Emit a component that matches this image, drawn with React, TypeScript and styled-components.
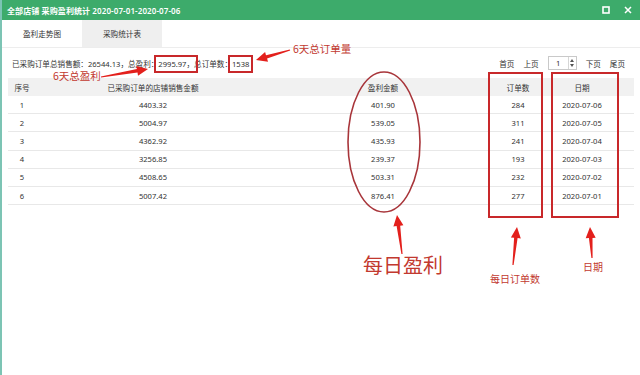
import React from 'react';
import styled, { createGlobalStyle } from 'styled-components';

// --- GLOBAL STYLES ---
const GlobalStyle = createGlobalStyle`
  * { margin: 0; padding: 0; box-sizing: border-box; }
  body { font-family: 'Noto Sans', 'Noto Sans CJK SC', sans-serif; background: #fff; color: #333; }
`;

// --- DATA ---
const rows = [
  { id: 1, sales: '4403.32', profit: '401.90', orders: 284, date: '2020-07-06' },
  { id: 2, sales: '5004.97', profit: '539.05', orders: 311, date: '2020-07-05' },
  { id: 3, sales: '4362.92', profit: '435.93', orders: 241, date: '2020-07-04' },
  { id: 4, sales: '3256.85', profit: '239.37', orders: 193, date: '2020-07-03' },
  { id: 5, sales: '4508.65', profit: '503.31', orders: 232, date: '2020-07-02' },
  { id: 6, sales: '5007.42', profit: '876.41', orders: 277, date: '2020-07-01' },
];

// --- STYLED COMPONENTS ---
const Window = styled.div`
  position: relative; width: 640px; height: 375px; overflow: hidden;
  display: flex; flex-direction: column; background: #fff;
  border-left: 2px solid #7cc4b4;
`;

const TitleBar = styled.div`
  height: 20px; flex-shrink: 0; background: #3dab6b; display: flex; align-items: center;
  padding: 0 8px 0 5px; color: #fff;
`;

const Title = styled.span`
  font-size: 8px; font-weight: 600; letter-spacing: 0.1px; white-space: nowrap;
`;

const WinButtons = styled.div`
  margin-left: auto; display: flex; align-items: center; gap: 14px;
`;

const TabBar = styled.div`
  height: 28px; flex-shrink: 0; display: flex; border-bottom: 1px solid #ededed;
`;

const Tab = styled.div<{ $active?: boolean }>`
  width: 80px; display: flex; align-items: center; justify-content: center;
  font-size: 7.6px; color: #333;
  background: ${p => (p.$active ? '#efefef' : 'transparent')};
`;

const Body = styled.div`
  flex: 1; padding: 0 6px 0 6px;
`;

const Toolbar = styled.div`
  height: 30px; display: flex; align-items: center; justify-content: space-between;
  padding: 0 9px 0 4px; font-size: 7.6px;
`;

const Summary = styled.div`
  white-space: nowrap;
`;

const Mark = styled.span`
  outline: 2px solid #c8282a; outline-offset: 2px;
`;

const Pager = styled.div`
  display: flex; align-items: center; gap: 9px;
`;

const PageInput = styled.div`
  width: 29px; height: 14px; border: 1px solid #c9c9c9; display: flex; align-items: stretch; background: #fff;
`;

const PageValue = styled.span`
  flex: 1; display: flex; align-items: center; justify-content: center; font-size: 7.6px;
`;

const Spin = styled.div`
  width: 8px; border-left: 1px solid #d6d6d6; display: flex; flex-direction: column;
  align-items: center; justify-content: space-around; padding: 1px 0;
`;

const SpinArrow = styled.span<{ $down?: boolean }>`
  width: 0; height: 0; border-left: 2px solid transparent; border-right: 2px solid transparent;
  ${p => (p.$down ? 'border-top: 3px solid #555;' : 'border-bottom: 3px solid #555;')}
`;

const Grid = styled.div`
  display: grid; grid-template-columns: 28px 234px 226px 44px 84px 1fr;
  font-size: 7.6px;
`;

const HeadRow = styled.div`
  display: contents;
  & > div { height: 18px; background: #f1f1f1; }
`;

const Row = styled.div`
  display: contents;
  & > div { height: 18.2px; border-bottom: 1px solid #e8e8e8; }
`;

const Cell = styled.div`
  display: flex; align-items: center; justify-content: center; white-space: nowrap;
`;

const Overlay = styled.svg`
  position: absolute; left: -2px; top: 0; pointer-events: none;
`;

const Note = styled.span<{ $size: number; $x: number; $y: number }>`
  position: absolute; left: ${p => p.$x}px; top: ${p => p.$y}px;
  font-size: ${p => p.$size}px; line-height: 1; color: #c2392f; white-space: nowrap;
  font-family: 'Noto Sans CJK SC', sans-serif;
`;

// tapered arrow from tail to tip
function arrowPoints(tx: number, ty: number, hx: number, hy: number) {
  const dx = hx - tx, dy = hy - ty;
  const len = Math.hypot(dx, dy);
  const ux = dx / len, uy = dy / len;
  const nx = -uy, ny = ux;
  const headLen = 11;
  const bx = hx - ux * headLen, by = hy - uy * headLen;
  const pts: [number, number][] = [
    [tx + nx * 0.6, ty + ny * 0.6],
    [bx + nx * 1.8, by + ny * 1.8],
    [bx + nx * 5, by + ny * 5],
    [hx, hy],
    [bx - nx * 5, by - ny * 5],
    [bx - nx * 1.8, by - ny * 1.8],
    [tx - nx * 0.6, ty - ny * 0.6],
  ];
  return pts.map(p => p.map(v => v.toFixed(1)).join(',')).join(' ');
}

const arrows = [
  [290, 50, 256, 60],
  [101, 77, 148, 69],
  [402, 254, 397, 215],
  [513, 265, 517, 227],
  [592, 258, 590, 227],
];

function App() {
  return (
    <>
      <GlobalStyle />
      <Window>
        <TitleBar>
          <Title>全部店铺 采购盈利统计 2020-07-01-2020-07-06</Title>
          <WinButtons>
            <svg width="8" height="8" viewBox="0 0 8 8">
              <rect x="1" y="1" width="6" height="6" fill="none" stroke="#fff" strokeWidth="1.6" />
            </svg>
            <svg width="8" height="8" viewBox="0 0 8 8">
              <path d="M1 1 L7 7 M7 1 L1 7" stroke="#fff" strokeWidth="1.5" />
            </svg>
          </WinButtons>
        </TitleBar>

        <TabBar>
          <Tab>盈利走势图</Tab>
          <Tab $active>采购统计表</Tab>
        </TabBar>

        <Body>
          <Toolbar>
            <Summary>
              已采购订单总销售额：26544.13，总盈利：<Mark>2995.97，</Mark>总订单数：<Mark>1538</Mark>
            </Summary>
            <Pager>
              <span>首页</span>
              <span>上页</span>
              <PageInput>
                <PageValue>1</PageValue>
                <Spin>
                  <SpinArrow />
                  <SpinArrow $down />
                </Spin>
              </PageInput>
              <span>下页</span>
              <span>尾页</span>
            </Pager>
          </Toolbar>

          <Grid>
            <HeadRow>
              <Cell>序号</Cell>
              <Cell>已采购订单的店铺销售金额</Cell>
              <Cell>盈利金额</Cell>
              <Cell>订单数</Cell>
              <Cell>日期</Cell>
              <Cell />
            </HeadRow>
            {rows.map(r => (
              <Row key={r.id}>
                <Cell>{r.id}</Cell>
                <Cell>{r.sales}</Cell>
                <Cell>{r.profit}</Cell>
                <Cell>{r.orders}</Cell>
                <Cell>{r.date}</Cell>
                <Cell />
              </Row>
            ))}
          </Grid>
        </Body>

        <Overlay width="640" height="375" viewBox="0 0 640 375">
          <ellipse cx="384" cy="142" rx="36" ry="70" fill="none" stroke="#a8353a" strokeWidth="1.6" />
          <rect x="489" y="73" width="53" height="144" fill="none" stroke="#c8282a" strokeWidth="2" />
          <rect x="552" y="73" width="66" height="144" fill="none" stroke="#c8282a" strokeWidth="2" />
          {arrows.map((a, i) => (
            <polygon key={i} points={arrowPoints(a[0], a[1], a[2], a[3])} fill="#e3201c" />
          ))}
        </Overlay>

        <Note $size={10.5} $x={291} $y={44}>6天总订单量</Note>
        <Note $size={10.5} $x={51} $y={71}>6天总盈利</Note>
        <Note $size={20} $x={361} $y={255}>每日盈利</Note>
        <Note $size={10} $x={488} $y={274}>每日订单数</Note>
        <Note $size={10} $x={581} $y={262}>日期</Note>
      </Window>
    </>
  );
}

export default App;
